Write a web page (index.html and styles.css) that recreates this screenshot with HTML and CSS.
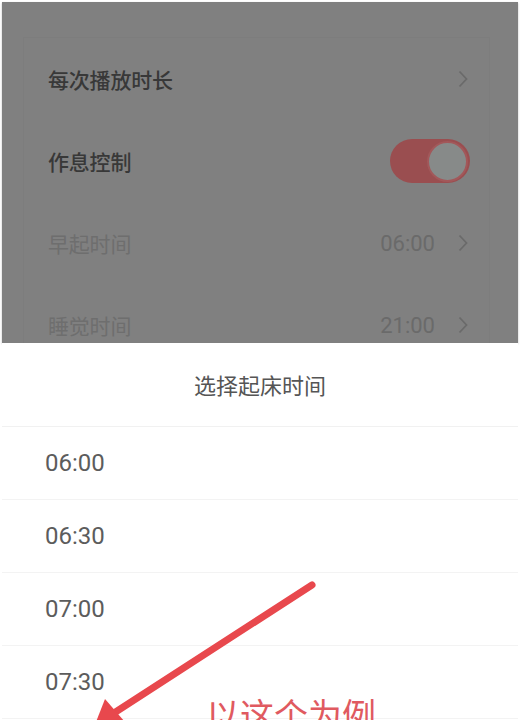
FILE: index.html
```html
<!DOCTYPE html>
<html lang="zh">
<head>
<meta charset="utf-8">
<title>选择起床时间</title>
<link rel="stylesheet" href="styles.css">
</head>
<body>
<div class="page">
  <div class="screen">
    <div class="dim">
      <div class="card">
        <div class="row">
          <span class="label">每次播放时长</span>
          <span class="right"><svg class="chev" viewBox="0 0 10 18"><path d="M1.5 1.5 L8.5 9 L1.5 16.5" fill="none" stroke="currentColor" stroke-width="1.8"/></svg></span>
        </div>
        <div class="row">
          <span class="label">作息控制</span>
          <span class="toggle"><span class="knob"></span></span>
        </div>
        <div class="row off">
          <span class="label">早起时间</span>
          <span class="right"><span class="value">06:00</span><svg class="chev" viewBox="0 0 10 18"><path d="M1.5 1.5 L8.5 9 L1.5 16.5" fill="none" stroke="currentColor" stroke-width="1.8"/></svg></span>
        </div>
        <div class="row off">
          <span class="label">睡觉时间</span>
          <span class="right"><span class="value">21:00</span><svg class="chev" viewBox="0 0 10 18"><path d="M1.5 1.5 L8.5 9 L1.5 16.5" fill="none" stroke="currentColor" stroke-width="1.8"/></svg></span>
        </div>
      </div>
    </div>
    <div class="sheet">
      <div class="sheet-title">选择起床时间</div>
      <ul class="times">
        <li>06:00</li>
        <li>06:30</li>
        <li>07:00</li>
        <li>07:30</li>
      </ul>
    </div>
  </div>
  <svg class="arrow" viewBox="0 0 528 720" width="528" height="720">
    <line x1="312" y1="585" x2="114" y2="713" stroke="#e8484d" stroke-width="7" stroke-linecap="round"/>
    <polygon points="94,727 105,699 125,722" fill="#e8484d"/>
  </svg>
  <div class="note">以这个为例</div>
</div>
</body>
</html>
```

FILE: styles.css
```css
* { box-sizing: border-box; }
html, body {
  margin: 0;
  padding: 0;
  background: #ffffff;
}
body {
  font-family: "Noto Sans CJK SC", Roboto, "Noto Sans", sans-serif;
  width: 528px;
  height: 720px;
  overflow: hidden;
}
.page {
  position: relative;
  width: 528px;
  height: 720px;
  overflow: hidden;
}
.screen {
  width: 516px;
  margin-left: 2px;
  padding-top: 2px;
  background: #ffffff;
}
.dim {
  height: 341px;
  background: #808080;
  padding: 35px 28px 0 21px;
  box-shadow: 0 1px 2px rgba(0,0,0,0.25);
  overflow: hidden;
}
.card {
  height: 100%;
  border-top: 1px solid rgba(0,0,0,0.025);
  border-left: 1px solid rgba(0,0,0,0.025);
  border-right: 1px solid rgba(0,0,0,0.025);
  padding: 0 21px 0 24px;
}
.row {
  height: 82px;
  display: flex;
  align-items: center;
  justify-content: space-between;
}
.label {
  font-size: 21px;
  font-weight: 500;
  color: #383838;
  letter-spacing: -0.2px;
}
.row.off .label { color: #6e6e6e; font-weight: 400; }
.right {
  display: flex;
  align-items: center;
  gap: 23px;
  color: #6a6a6a;
}
.value {
  font-family: Roboto, sans-serif;
  font-size: 22px;
  color: #6a6a6a;
}
.chev {
  width: 10px;
  height: 18px;
  display: block;
}
.toggle {
  width: 80px;
  height: 44px;
  border-radius: 22px;
  background: #9a4e50;
  display: flex;
  align-items: center;
  justify-content: flex-end;
  padding-right: 2px;
  margin-right: -2px;
}
.knob {
  width: 41px;
  height: 41px;
  border-radius: 50%;
  background: #878a89;
  border: 2px solid #a2585a;
}
.sheet {
  background: #ffffff;
}
.sheet-title {
  height: 84px;
  display: flex;
  align-items: center;
  justify-content: center;
  font-size: 22px;
  color: #555555;
  padding-bottom: 2px;
  border-bottom: 1px solid #f1f1f1;
}
.times {
  list-style: none;
  margin: 0;
  padding: 0;
}
.times li {
  height: 73px;
  display: flex;
  align-items: center;
  padding-left: 43px;
  font-family: Roboto, sans-serif;
  font-size: 24px;
  color: #5c5c5c;
  border-bottom: 1px solid #f3f3f3;
}
.arrow {
  position: absolute;
  left: 0;
  top: 0;
  pointer-events: none;
}
.note {
  position: absolute;
  left: 206px;
  top: 694px;
  font-size: 34px;
  color: #e05a60;
  line-height: 1.2;
}
```
